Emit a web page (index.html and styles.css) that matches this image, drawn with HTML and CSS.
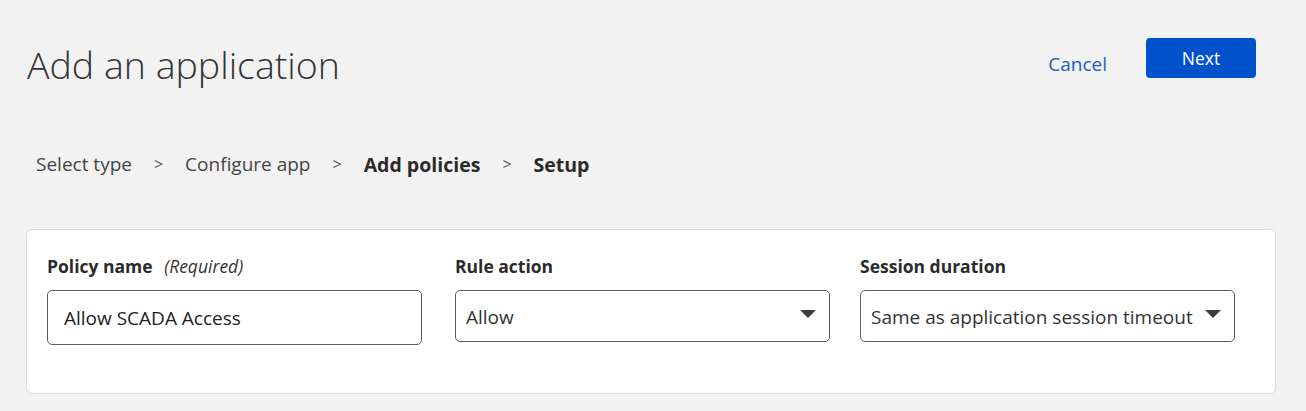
FILE: index.html
```html
<!DOCTYPE html>
<html lang="en">
<head>
<meta charset="utf-8">
<title>Add an application</title>
<link rel="stylesheet" href="styles.css">
</head>
<body>
<div class="page">
  <header class="header">
    <h1 class="title">Add an application</h1>
    <div class="actions">
      <a class="cancel" href="#">Cancel</a>
      <button class="next" type="button">Next</button>
    </div>
  </header>
  <nav class="crumbs">
    <span class="crumb">Select type</span>
    <span class="sep">&gt;</span>
    <span class="crumb">Configure app</span>
    <span class="sep">&gt;</span>
    <span class="crumb strong">Add policies</span>
    <span class="sep">&gt;</span>
    <span class="crumb strong">Setup</span>
  </nav>
  <section class="card">
    <div class="field">
      <label class="label">Policy name <em class="req">(Required)</em></label>
      <div class="input">Allow SCADA Access</div>
    </div>
    <div class="field">
      <label class="label">Rule action</label>
      <div class="select"><span>Allow</span><span class="caret"></span></div>
    </div>
    <div class="field">
      <label class="label">Session duration</label>
      <div class="select"><span>Same as application session timeout</span><span class="caret"></span></div>
    </div>
  </section>
</div>
</body>
</html>
```
FILE: styles.css
```css
* { box-sizing: border-box; }
html, body { margin: 0; padding: 0; }
body {
  background: #f2f2f2;
  font-family: "Open Sans", "Noto Sans", sans-serif;
  color: #323232;
  width: 1306px;
  height: 411px;
  overflow: hidden;
}
.page { padding: 0 30px 0 26px; }
.header {
  display: flex;
  justify-content: space-between;
  align-items: flex-start;
  height: 128px;
  padding-right: 20px;
}
.title {
  margin: 38px 0 0 1px;
  font-weight: 300;
  font-size: 37.5px;
  line-height: 54px;
  color: #333;
}
.actions {
  display: flex;
  align-items: center;
  gap: 39px;
  margin-top: 38px;
}
.cancel {
  color: #1a5cc4;
  text-decoration: none;
  font-size: 19px;
  margin-top: 11px;
}
.next {
  width: 110px;
  height: 40px;
  border: none;
  border-radius: 4px;
  background: #0052cc;
  color: #fff;
  font-family: inherit;
  font-size: 17.5px;
}
.crumbs {
  display: flex;
  align-items: center;
  padding-left: 10px;
  height: 72px;
  font-size: 19px;
  color: #444;
}
.crumb.strong { font-weight: 700; color: #2a2a2a; font-size: 19.5px; }
.sep { margin: 0 22px; font-size: 16px; color: #555; }
.card {
  margin-top: 29px;
  background: #fff;
  border: 1px solid #dcdcdc;
  border-radius: 6px;
  height: 165px;
  padding: 25px 0 0 20px;
  display: grid;
  grid-template-columns: 408px 405px 375px;
  align-items: start;
}
.field { display: flex; flex-direction: column; width: 375px; }
.label {
  font-weight: 700;
  font-size: 17.5px;
  color: #2b2b2b;
  line-height: 22px;
  margin-bottom: 13px;
}
.req { font-weight: 400; font-style: italic; font-size: 17.5px; margin-left: 7px; color: #333; }
.input {
  height: 55px;
  border: 1px solid #5e5e5e;
  border-radius: 5px;
  padding: 0 16px;
  display: flex;
  align-items: center;
  font-size: 19px;
  color: #222;
}
.select {
  height: 52px;
  border: 1px solid #5e5e5e;
  border-radius: 5px;
  padding: 2px 13px 0 10px;
  display: flex;
  align-items: center;
  justify-content: space-between;
  font-size: 19px;
  color: #333;
}
.caret {
  width: 0; height: 0;
  border-left: 8px solid transparent;
  border-right: 8px solid transparent;
  border-top: 8px solid #3c3c3c;
  margin-top: -7px;
}
```
